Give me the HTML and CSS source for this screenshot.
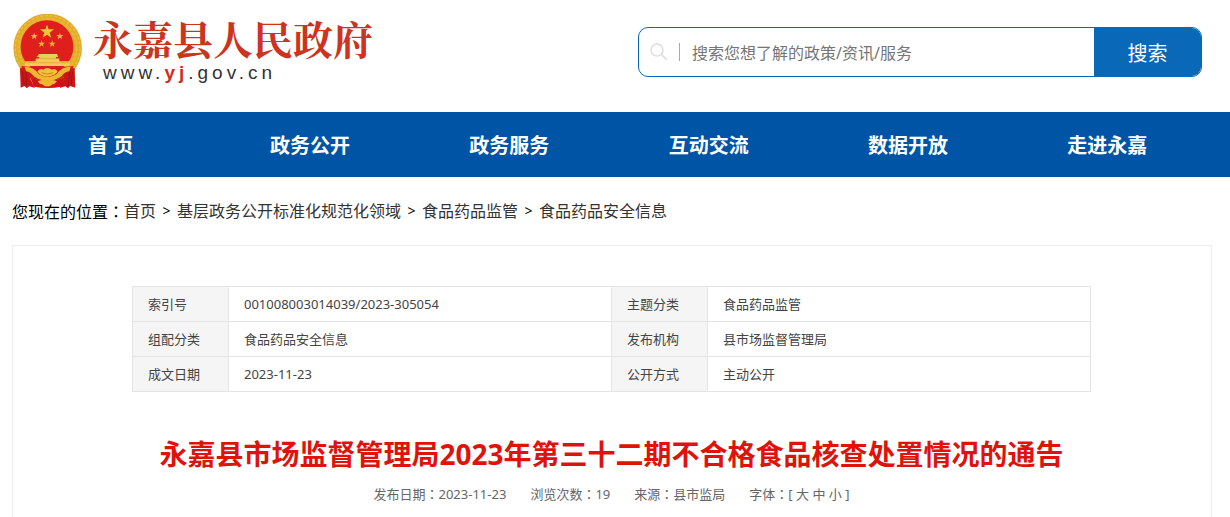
FILE: index.html
```
<!DOCTYPE html>
<html lang="zh-CN">
<head>
    <meta charset="UTF-8">
    <title>永嘉县人民政府</title>
    <link rel="stylesheet" href="styles.css">
</head>
<body>
    <div class="header">
        <a class="logo" href="#">
            <svg class="emblem" viewBox="36 42 213 225" aria-hidden="true">
                <circle cx="143" cy="144" r="103" fill="#e2aa29"/>
                <circle cx="143" cy="144" r="97" fill="none" stroke="#efc03c" stroke-width="4" stroke-dasharray="9 5"/>
                <circle cx="143" cy="143" r="87" fill="none" stroke="#e9b633" stroke-width="8" stroke-dasharray="12 3"/>
                <circle cx="141" cy="140" r="79" fill="#df1f1c"/>
                <path d="M141 74l5 14 16 0-13 10 5 15-13-9-13 9 5-15-13-10 16 0z" fill="#f3c33b"/>
                <g fill="#eeb535">
                    <path id="star" d="M103 98l2 7 8 0-6 5 2 8-6-5-7 5 2-8-6-5 8 0z"/>
                    <use href="#star" x="77"/>
                    <use href="#star" x="22" y="23"/>
                    <use href="#star" x="54" y="23"/>
                </g>
                <path d="M117 162h54l4 9h-7v5h10v8h31v14H76v-14h31v-8h10v-5h-7z" fill="#f4cb56"/>
                <path d="M108 176h70M77 188h130" stroke="#dba030" stroke-width="2"/>
                <path d="M64 198q77 12 157 0l-8 22q-68 48-145 0z" fill="#d51a18"/>
                <path d="M60 204l15 3 21 9-5 21 14 27-17-5-8 6-6-7-12 5z" fill="#cc1517"/>
                <path d="M224 204l-15 3-21 9 5 21-14 27 17-5 8 6 6-7 16 5z" fill="#cc1517"/>
                <path d="M66 215l7 40M78 216l2 44M208 216l-3 44M217 215l-3 40" stroke="#a31015" stroke-width="3"/>
                <path d="M90 232q52 22 106 0l-12 28q-40 8-82 0z" fill="#cc1517"/>
                <path d="M74 200q28 0 42 22 28 18 54 0 14-22 42-22l-4 14q-15 1-23 15-42 27-84 0-9-14-23-15z" fill="#edb72f"/>
                <path d="M112 214q10-10 17-5 13-10 27 0 8-5 17 5-7 15-31 16-23-1-30-16z" fill="#f0c13b"/>
                <path d="M125 218q17 9 34 0" fill="none" stroke="#c98b18" stroke-width="3"/>
                <path d="M113 244q13-8 29-3 15-5 29 3-7 9-13 9-6 7-16 6-10 1-16-6-8 0-13-9z" fill="#edb72f"/>
            </svg>
            <span class="logo-text">
                <span class="site-name">永嘉县人民政府</span>
                <span class="site-url">www.<b>yj</b>.gov.cn</span>
            </span>
        </a>
        <form class="search">
            <svg class="search-icon" viewBox="0 0 18 18" aria-hidden="true">
                <circle cx="7" cy="7" r="6" fill="none" stroke="#ddd" stroke-width="1.5"/>
                <path d="M11.5 11.5L17 17" stroke="#ddd" stroke-width="1.5"/>
            </svg>
            <input class="search-input" type="text" aria-label="搜索" placeholder="搜索您想了解的政策/资讯/服务">
            <button class="search-btn" type="submit">搜索</button>
        </form>
    </div>

    <div class="nav">
        <a href="#">首 页</a>
        <a href="#">政务公开</a>
        <a href="#">政务服务</a>
        <a href="#">互动交流</a>
        <a href="#">数据开放</a>
        <a href="#">走进永嘉</a>
    </div>

    <div class="crumbs">
        <span>您现在的位置<span class="colon" lang="zh-TW">：</span></span>
        <a href="#">首页</a>
        <span class="sep">&gt;</span>
        <a href="#">基层政务公开标准化规范化领域</a>
        <span class="sep">&gt;</span>
        <a href="#">食品药品监管</a>
        <span class="sep">&gt;</span>
        <a href="#">食品药品安全信息</a>
    </div>

    <div class="article">
        <table class="info">
            <tr>
                <th scope="row">索引号</th>
                <td>001008003014039/2023-305054</td>
                <th scope="row">主题分类</th>
                <td>食品药品监管</td>
            </tr>
            <tr>
                <th scope="row">组配分类</th>
                <td>食品药品安全信息</td>
                <th scope="row">发布机构</th>
                <td>县市场监督管理局</td>
            </tr>
            <tr>
                <th scope="row">成文日期</th>
                <td>2023-11-23</td>
                <th scope="row">公开方式</th>
                <td>主动公开</td>
            </tr>
        </table>
        <h1>永嘉县市场监督管理局2023年第三十二期不合格食品核查处置情况的通告</h1>
        <div class="meta">
            <span>发布日期<span class="colon" lang="zh-TW">：</span>2023-11-23</span>
            <span>浏览次数<span class="colon" lang="zh-TW">：</span>19</span>
            <span>来源<span class="colon" lang="zh-TW">：</span>县市监局</span>
            <span>字体<span class="colon" lang="zh-TW">：</span>[ <a href="#">大</a> <a href="#">中</a> <a href="#">小</a> ]</span>
        </div>
    </div>
</body>
</html>
```
FILE: styles.css
```
* {
    box-sizing: border-box;
}
body {
    display: flex;
    flex-direction: column;
    min-height: 100vh;
    margin: 0;
    background: #fff;
    color: #000;
    font-family: "Noto Sans", "Noto Sans CJK SC", sans-serif;
    font-size: 16px;
}
a {
    color: inherit;
    text-decoration: none;
}
.colon {
    font-family: "Noto Sans CJK TC", sans-serif;
}
.header {
    display: flex;
    justify-content: space-between;
    align-items: flex-start;
    height: 112px;
    padding: 14px 28px 0 12px;
}
.logo {
    display: flex;
    gap: 10px;
}
.emblem {
    width: 71px;
    height: 75px;
}
.logo-text {
    display: flex;
    flex-direction: column;
}
.site-name {
    color: #cc3420;
    font-family: "Noto Serif CJK SC", "Noto Sans CJK SC", serif;
    font-size: 40px;
    font-weight: 700;
    line-height: 48px;
}
.site-url {
    padding-left: 10px;
    color: #333;
    font-family: "Liberation Sans", Arial, sans-serif;
    font-size: 19px;
    line-height: 22px;
    letter-spacing: 4px;
}
.site-url b {
    color: #d22b1c;
}
.search {
    display: flex;
    align-items: center;
    width: 564px;
    height: 50px;
    margin-top: 13px;
    padding-left: 11px;
    border: 1px solid #0a68b8;
    border-radius: 10px;
    overflow: hidden;
}
.search-icon {
    width: 18px;
    height: 18px;
    margin-right: 11px;
}
.search-input {
    flex: 1;
    min-width: 0;
    height: 18px;
    padding: 1px 12px 0;
    border: 0;
    border-left: 1px solid #aaa;
    outline: none;
    font: 16px "Noto Sans", "Noto Sans CJK SC", sans-serif;
}
.search-input::placeholder {
    color: #757575;
}
.search-btn {
    align-self: stretch;
    width: 107px;
    padding: 0;
    border: 0;
    background: #0a68b8;
    color: #fff;
    font: 20px "Noto Sans CJK SC", sans-serif;
    cursor: pointer;
}
.nav {
    display: flex;
    padding: 2px 23px 0 11px;
    background: #0054a6;
}
.nav a {
    flex: 1;
    color: #fff;
    font-size: 20px;
    font-weight: 700;
    line-height: 63px;
    text-align: center;
}
.crumbs {
    display: flex;
    padding: 22px 12px 21px;
    line-height: 24px;
}
.crumbs a {
    color: #333;
}
.crumbs .sep {
    width: 21px;
    font-size: 14px;
    text-align: center;
}
.article {
    flex: 1;
    margin: 0 18px 0 12px;
    padding: 40px 120px 0 119px;
    border: 1px solid #eee;
    border-bottom: 0;
}
.info {
    width: 100%;
    table-layout: fixed;
    border-collapse: collapse;
    color: #444;
    font-size: 13px;
}
.info th,
.info td {
    height: 35px;
    padding: 0 15px;
    border: 1px solid #e4e4e4;
    font-weight: 400;
    line-height: 20px;
    text-align: left;
}
.info th {
    width: 96px;
    background: #f5f5f5;
}
.article h1 {
    margin: 42px 0 10px;
    color: #dd130c;
    font-size: 28px;
    font-weight: 700;
    line-height: 40px;
    text-align: center;
    white-space: nowrap;
}
.meta {
    display: flex;
    justify-content: center;
    gap: 24px;
    color: #666;
    font-size: 13px;
    line-height: 20px;
}
```
